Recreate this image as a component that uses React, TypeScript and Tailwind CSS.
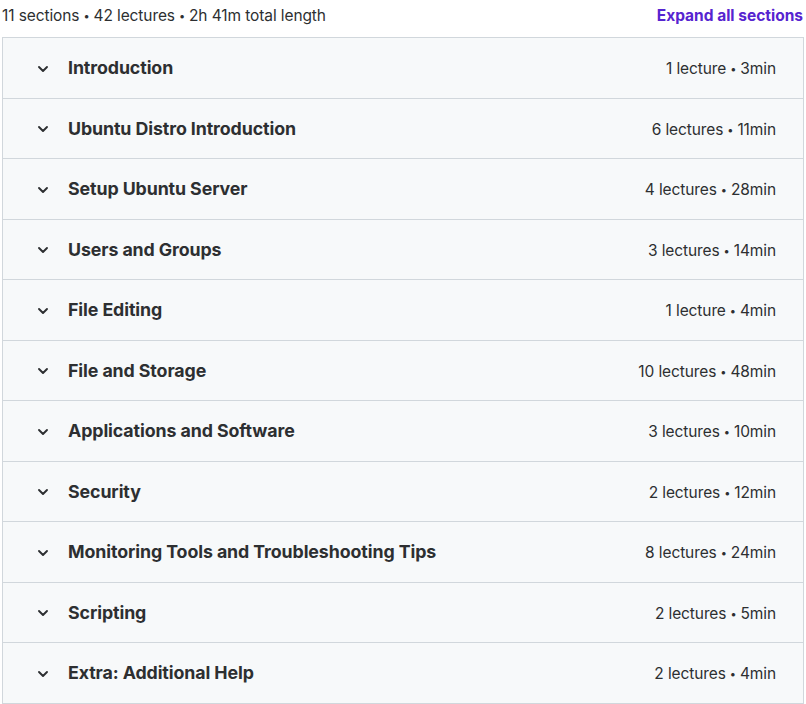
import React from "react";

const sections = [
  { title: "Introduction", lectures: "1 lecture", time: "3min" },
  { title: "Ubuntu Distro Introduction", lectures: "6 lectures", time: "11min" },
  { title: "Setup Ubuntu Server", lectures: "4 lectures", time: "28min" },
  { title: "Users and Groups", lectures: "3 lectures", time: "14min" },
  { title: "File Editing", lectures: "1 lecture", time: "4min" },
  { title: "File and Storage", lectures: "10 lectures", time: "48min" },
  { title: "Applications and Software", lectures: "3 lectures", time: "10min" },
  { title: "Security", lectures: "2 lectures", time: "12min" },
  { title: "Monitoring Tools and Troubleshooting Tips", lectures: "8 lectures", time: "24min" },
  { title: "Scripting", lectures: "2 lectures", time: "5min" },
  { title: "Extra: Additional Help", lectures: "2 lectures", time: "4min" },
];

function Chevron() {
  return (
    <svg width="14" height="14" viewBox="0 0 14 14" fill="none" className="shrink-0">
      <path d="M3 5 L7 9 L11 5" stroke="#2d2f31" strokeWidth="1.9" strokeLinecap="round" strokeLinejoin="round" />
    </svg>
  );
}

function Dot() {
  return <span className="text-[11px] align-[1px] mx-[4px]">•</span>;
}

export default function App() {
  return (
    <div className="w-[806px] h-[704px] bg-white text-[#2d2f31] font-['Inter',sans-serif] overflow-hidden">
      <div className="flex items-center justify-between h-[30px] pt-[2px] pl-[2px] pr-[3px]">
        <span className="text-[15.5px] tracking-[-0.1px]">
          11 sections<Dot />42 lectures<Dot />2h 41m total length
        </span>
        <button className="text-[15.5px] font-bold text-[#5624d0]">Expand all sections</button>
      </div>
      <div className="mt-[7px] ml-[2px] w-[802px] border border-[#d1d7dc] border-b-0">
        {sections.map((s) => (
          <div
            key={s.title}
            className="flex items-center h-[60.5px] border-b border-[#d1d7dc] bg-[#f7f9fa] pt-[2px] pl-[33px] pr-[27px]"
          >
            <Chevron />
            <span className="ml-[18px] text-[17.8px] font-bold flex-1 tracking-[-0.1px]">{s.title}</span>
            <span className="text-[15.5px] tracking-[-0.1px]">
              {s.lectures}<Dot />{s.time}
            </span>
          </div>
        ))}
      </div>
    </div>
  );
}
